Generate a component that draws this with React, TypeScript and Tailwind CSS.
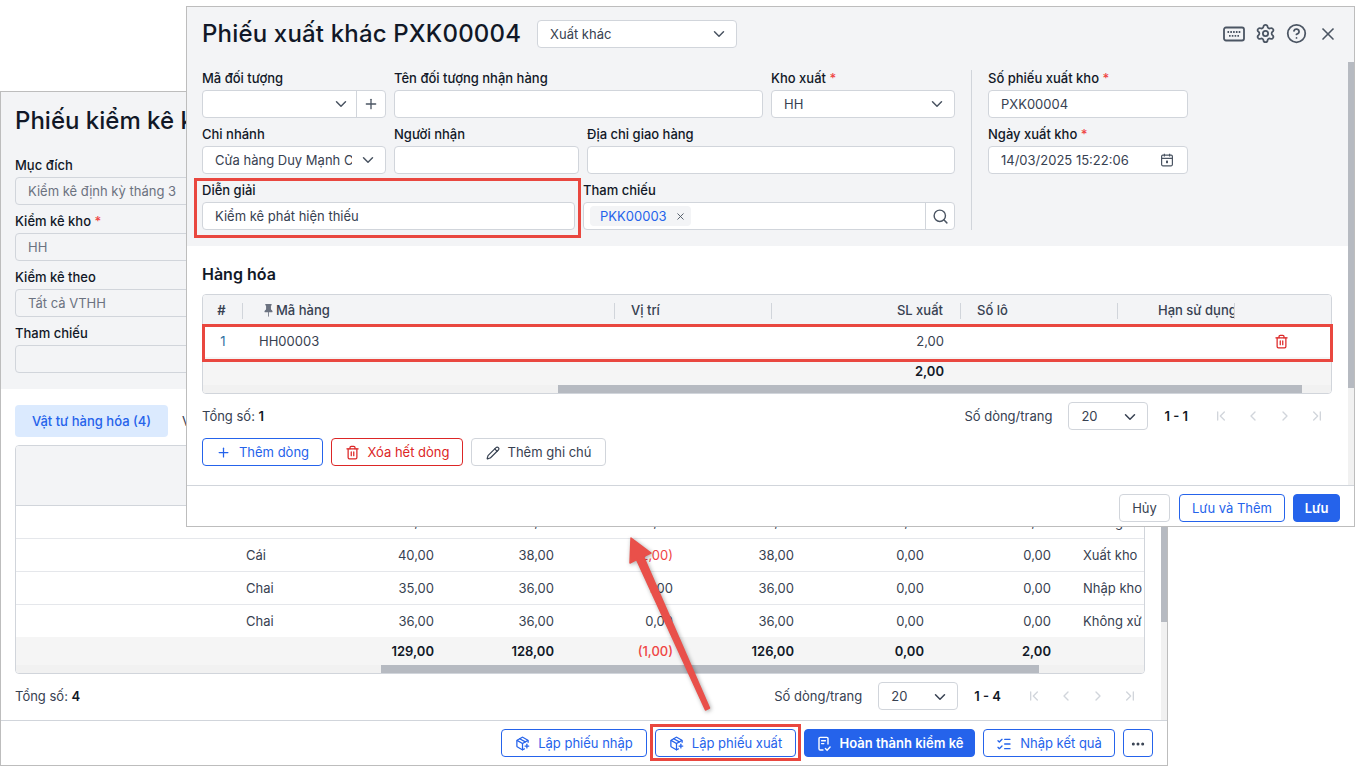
import type { ReactNode } from "react";
import {
  ChevronDown,
  ChevronFirst,
  ChevronLast,
  ChevronLeft,
  ChevronRight,
  CircleHelp,
  Ellipsis,
  ListChecks,
  PackagePlus,
  Pencil,
  Plus,
  Search,
  Settings,
  Trash2,
  X,
} from "lucide-react";
import { BsPinFill } from "react-icons/bs";

function Label({ text, required }: { text: string; required?: boolean }) {
  return (
    <div className="h-4 mb-1 text-[13px] leading-4 font-medium text-[#111827] whitespace-nowrap">
      {text}
      {required && <span className="text-[#ef4444]"> *</span>}
    </div>
  );
}

function Box({ children, muted, className = "" }: { children?: ReactNode; muted?: boolean; className?: string }) {
  return (
    <div
      className={`h-7 flex items-center rounded border border-[#d1d5db] text-[13px] whitespace-nowrap overflow-hidden ${
        muted ? "bg-[#f3f4f6] text-[#6b7280]" : "bg-white text-[#374151]"
      } ${className}`}
    >
      {children}
    </div>
  );
}

function Field({
  label,
  value,
  required,
  muted,
  className = "",
  chevron,
}: {
  label: string;
  value?: string;
  required?: boolean;
  muted?: boolean;
  className?: string;
  chevron?: boolean;
}) {
  return (
    <div className={className}>
      <Label text={label} required={required} />
      <Box muted={muted} className="pl-3 pr-2">
        <span className={`flex-1 overflow-hidden pt-px ${chevron ? "mr-[7px]" : ""}`}>{value}</span>
        {chevron && <ChevronDown size={18} className="text-[#4b5563] shrink-0" />}
      </Box>
    </div>
  );
}

function CalendarIcon() {
  return (
    <svg width="14" height="14" viewBox="0 0 14 14" fill="none" stroke="#4b5563" strokeWidth="1.2">
      <rect x="1.6" y="2.2" width="10.8" height="10.6" rx="1.2" />
      <path d="M1.6 5.4h10.8M4.4 .8v2.6M9.6 .8v2.6" />
      <rect x="6" y="7.6" width="2" height="2.6" fill="#4b5563" stroke="none" />
    </svg>
  );
}

function KeyboardIcon() {
  return (
    <svg width="22" height="16" viewBox="0 0 22 16" fill="none" stroke="#4b5563" strokeWidth="1.8">
      <rect x="1" y="1.5" width="20" height="13" rx="2" />
      <path d="M4.5 6h13M6 9.8h10" strokeDasharray="1.6 1.2" />
    </svg>
  );
}

function DocCheckIcon() {
  return (
    <svg width="16" height="16" viewBox="0 0 16 16" fill="none" stroke="currentColor" strokeWidth="1.4" strokeLinecap="round">
      <path d="M7 14H4.2A1.2 1.2 0 0 1 3 12.8V2.6a1.2 1.2 0 0 1 1.2-1.2h6.6A1.2 1.2 0 0 1 12 2.6V8" />
      <path d="M5.6 4.8h3.8M5.6 7.6h2.2M9.4 12.6l1.7 1.7 3-3.2" />
    </svg>
  );
}

function Pager({ range, className = "" }: { range: string; className?: string }) {
  return (
    <div className={`flex items-center justify-end h-7 text-[13px] text-[#374151] ${className}`}>
      <span className="mr-4 pt-px">Số dòng/trang</span>
      <div className="w-20 h-7 flex items-center justify-between pl-3 pr-2 pt-px mr-4 rounded border border-[#d1d5db] bg-white">
        20
        <ChevronDown size={18} className="text-[#374151]" />
      </div>
      <span className="font-semibold text-[#111827] mr-[25px] pt-px whitespace-nowrap">{range}</span>
      <div className="flex gap-4 text-[#d1d5db]">
        <ChevronFirst size={16} />
        <ChevronLeft size={16} />
        <ChevronRight size={16} />
        <ChevronLast size={16} />
      </div>
    </div>
  );
}

function Btn({ children, tone, className = "" }: { children: ReactNode; tone: "blue" | "red" | "gray" | "solid"; className?: string }) {
  const tones = {
    blue: "border-[#2563eb] text-[#2563eb] bg-white",
    red: "border-[#dc2626] text-[#dc2626] bg-white",
    gray: "border-[#d1d5db] text-[#374151] bg-white",
    solid: "border-[#2563eb] text-white bg-[#2563eb] font-semibold",
  };
  return (
    <button className={`h-7 pt-px flex items-center justify-center rounded border text-[13px] whitespace-nowrap ${tones[tone]} ${className}`}>
      {children}
    </button>
  );
}

const stockRows = [
  ["Chai", "18,00", "18,00", "0,00", "16,00", "0,00", "2,00", "Không xử lý"],
  ["Cái", "40,00", "38,00", "(2,00)", "38,00", "0,00", "0,00", "Xuất kho"],
  ["Chai", "35,00", "36,00", "1,00", "36,00", "0,00", "0,00", "Nhập kho"],
  ["Chai", "36,00", "36,00", "0,00", "36,00", "0,00", "0,00", "Không xử lý"],
];

const stockGrid = "grid grid-cols-[214px_100px_120px_120px_119px_121px_130px_127px_77px] items-center";

function StockTable() {
  return (
    <div className="w-[1130px] border border-[#d1d5db] rounded overflow-hidden text-[13px] text-[#374151]">
      <div className="h-[60px] bg-[#f3f4f6] border-b border-[#d1d5db]" />
      {stockRows.map((row, i) => (
        <div key={i} className={`${stockGrid} pt-[2px] ${i < 3 ? "h-[33px] border-b border-[#e5e7eb]" : "h-8"}`}>
          <span />
          <span className="pl-4">{row[0]}</span>
          {row.slice(1, 7).map((v, j) => (
            <span key={j} className={`text-right pr-4 ${v.startsWith("(") ? "text-[#ef4444]" : ""}`}>
              {v}
            </span>
          ))}
          <span className="pl-4 overflow-hidden whitespace-nowrap">{row[7]}</span>
        </div>
      ))}
      <div className={`${stockGrid} h-7 pt-px bg-[#f5f5f5] font-semibold text-[#111827]`}>
        <span />
        <span />
        <span className="text-right pr-4">129,00</span>
        <span className="text-right pr-4">128,00</span>
        <span className="text-right pr-4 font-medium text-[#ef4444]">(1,00)</span>
        <span className="text-right pr-4">126,00</span>
        <span className="text-right pr-4">0,00</span>
        <span className="text-right pr-4">2,00</span>
      </div>
      <div className="h-2 bg-[#f1f1f1] pl-[365px] pr-[105px]">
        <div className="h-full bg-[#b6bac1]" />
      </div>
    </div>
  );
}

function AuditWindow() {
  return (
    <section className="absolute left-0 top-[91px] w-[1168px] h-[675px] flex flex-col bg-white border border-[#bdbdbd]">
      <div className="flex-1 min-h-0 flex">
        <div className="flex-1 min-w-0 overflow-hidden">
          <div className="h-[297px] bg-[#f3f4f6] pl-[14px] pt-[13px]">
            <h1 className="h-8 text-2xl leading-8 font-medium text-[#111827] whitespace-nowrap mb-5">
              Phiếu kiểm kê kho KK00002
            </h1>
            <div className="w-[400px] flex flex-col gap-2">
              <Field label="Mục đích" value="Kiểm kê định kỳ tháng 3" muted />
              <Field label="Kiểm kê kho" value="HH" required muted />
              <Field label="Kiểm kê theo" value="Tất cả VTHH" muted />
              <Field label="Tham chiếu" muted />
            </div>
          </div>
          <div className="pl-[14px] pt-4">
            <div className="flex items-center gap-[14px] h-8 mb-2 text-[13px]">
              <div className="w-[153px] h-8 pt-px flex items-center justify-center rounded bg-[#dbeafe] text-[#2563eb] font-medium">
                Vật tư hàng hóa (4)
              </div>
              <div className="pt-px text-[#374151]">Vị trí</div>
            </div>
            <StockTable />
            <div className="w-[1130px] flex items-center justify-between mt-2">
              <div className="pt-px text-[13px] text-[#374151]">
                Tổng số: <b className="font-semibold text-[#111827]">4</b>
              </div>
              <Pager range="1 - 4" className="pr-[7px]" />
            </div>
            <div className="mt-[7px] text-[13px] font-medium text-[#111827]">Ghi chú</div>
          </div>
        </div>
        <div className="w-[6px] shrink-0 bg-[#f1f1f1]">
          <div className="h-[530px] bg-[#b6bac1]" />
        </div>
      </div>
      <footer className="h-[45px] shrink-0 border-t border-[#d1d5db] flex items-start justify-end gap-2 pt-2 pr-[14px]">
        <Btn tone="blue" className="w-[146px] gap-2">
          <PackagePlus size={15} />
          Lập phiếu nhập
        </Btn>
        <Btn tone="blue" className="w-[141px] gap-2">
          <PackagePlus size={15} />
          Lập phiếu xuất
        </Btn>
        <Btn tone="solid" className="w-[171px] gap-2">
          <DocCheckIcon />
          Hoàn thành kiểm kê
        </Btn>
        <Btn tone="blue" className="w-[132px] gap-2">
          <ListChecks size={16} />
          Nhập kết quả
        </Btn>
        <Btn tone="blue" className="w-[30px] !text-[#374151]">
          <Ellipsis size={16} strokeWidth={2.5} />
        </Btn>
      </footer>
    </section>
  );
}

const lineGrid = "grid grid-cols-[40px_372px_157px_189px_157px_117px_96px] items-center";

function LineTable() {
  const sep = "h-4 flex items-center border-r border-[#d1d5db]";
  return (
    <div className="border border-[#d1d5db] rounded overflow-hidden text-[13px]">
      <div className={`${lineGrid} h-[31px] bg-[#f3f4f6] font-medium text-[#374151]`}>
        <div className={`${sep} justify-center pr-[2px] font-semibold`}>#</div>
        <div className={`${sep} pl-[19px]`}>
          <BsPinFill size={13} className="text-[#6b7280] mr-[1px]" />
          Mã hàng
        </div>
        <div className={`${sep} pl-4`}>Vị trí</div>
        <div className={`${sep} justify-end pr-[17px]`}>SL xuất</div>
        <div className={`${sep} pl-4`}>Số lô</div>
        <div className={`${sep} pl-10 overflow-hidden whitespace-nowrap`}>Hạn sử dụng</div>
        <div />
      </div>
      <div className={`${lineGrid} h-[31px] bg-white text-[#374151]`}>
        <span className="text-center text-[#2f6f9f]">1</span>
        <span className="pl-4">HH00003</span>
        <span />
        <span className="text-right pr-[17px]">2,00</span>
        <span />
        <span />
        <span className="flex justify-center pr-[3px]">
          <Trash2 size={15} className="text-[#dc2626]" />
        </span>
      </div>
      <div className={`${lineGrid} h-7 pt-px bg-[#f5f5f5] font-semibold text-[#111827]`}>
        <span />
        <span />
        <span />
        <span className="text-right pr-[17px]">2,00</span>
      </div>
      <div className="h-2 bg-[#f1f1f1] pl-[355px] pr-[29px]">
        <div className="h-full bg-[#b6bac1]" />
      </div>
    </div>
  );
}

function IssueWindow() {
  return (
    <section className="absolute left-[186px] top-[6px] w-[1169px] h-[521px] flex flex-col bg-white border border-[#bdbdbd]">
      <header className="h-[55px] shrink-0 bg-[#f3f4f6] flex items-center pb-[2px] pl-[15px] pr-4">
        <h2 className="text-2xl tracking-[0.17px] font-medium text-[#111827] whitespace-nowrap">Phiếu xuất khác PXK00004</h2>
        <Box className="w-[200px] ml-4 pl-3 pr-2 justify-between">
          <span className="pt-[3px]">Xuất khác</span>
          <ChevronDown size={18} className="text-[#4b5563]" />
        </Box>
        <div className="ml-auto flex items-center gap-[10px] text-[#4b5563]">
          <KeyboardIcon />
          <Settings size={21} />
          <CircleHelp size={21} />
          <X size={20} className="ml-[1px]" />
        </div>
      </header>
      <div className="flex-1 min-h-0 flex">
        <div className="flex-1 min-w-0">
          <div className="h-[184px] bg-[#f3f4f6] flex pt-2 pl-[15px]">
            <div className="w-[753px] flex flex-col gap-2">
              <div className="flex gap-2">
                <div className="w-[184px]">
                  <Label text="Mã đối tượng" />
                  <Box>
                    <span className="flex-1" />
                    <ChevronDown size={18} className="text-[#4b5563] mr-[6px]" />
                    <span className="w-[29px] h-full flex items-center justify-center border-l border-[#d1d5db] text-[#4b5563]">
                      <Plus size={16} />
                    </span>
                  </Box>
                </div>
                <Field label="Tên đối tượng nhận hàng" className="w-[369px]" />
                <Field label="Kho xuất" value="HH" required chevron className="w-[184px]" />
              </div>
              <div className="flex gap-2">
                <Field label="Chi nhánh" value="Cửa hàng Duy Mạnh Cầu Giấy" chevron className="w-[184px]" />
                <Field label="Người nhận" className="w-[185px]" />
                <Field label="Địa chỉ giao hàng" className="w-[368px]" />
              </div>
              <div className="flex gap-2">
                <Field label="Diễn giải" value="Kiểm kê phát hiện thiếu" className="w-[373px]" />
                <div className="w-[372px]">
                  <Label text="Tham chiếu" />
                  <Box>
                    <span className="ml-[6px] h-5 pl-[10px] pr-[5px] pt-px flex items-center gap-[8px] rounded-sm bg-[#f3f4f6] text-[#2563eb]">
                      PKK00003
                      <X size={11} className="text-[#4b5563]" />
                    </span>
                    <span className="ml-auto w-[29px] h-full flex items-center justify-center border-l border-[#d1d5db] text-[#4b5563]">
                      <Search size={17} />
                    </span>
                  </Box>
                </div>
              </div>
            </div>
            <div className="w-px h-40 bg-[#d1d5db] mx-4" />
            <div className="w-[200px] flex flex-col gap-2">
              <Field label="Số phiếu xuất kho" value="PXK00004" required />
              <div>
                <Label text="Ngày xuất kho" required />
                <Box className="pl-3 pr-[13px] justify-between">
                  <span className="pt-px">14/03/2025 15:22:06</span>
                  <CalendarIcon />
                </Box>
              </div>
            </div>
          </div>
          <div className="pl-[15px] pr-4 pt-5">
            <h3 className="h-4 leading-4 mb-3 text-base font-semibold text-[#111827]">Hàng hóa</h3>
            <LineTable />
            <div className="flex items-center justify-between mt-2">
              <div className="pt-px text-[13px] text-[#374151]">
                Tổng số: <b className="font-semibold text-[#111827]">1</b>
              </div>
              <Pager range="1 - 1" className="pr-[7px]" />
            </div>
            <div className="flex gap-2 mt-2">
              <Btn tone="blue" className="w-[121px] gap-2">
                <Plus size={15} />
                Thêm dòng
              </Btn>
              <Btn tone="red" className="w-[132px] gap-2">
                <Trash2 size={15} />
                Xóa hết dòng
              </Btn>
              <Btn tone="gray" className="w-[135px] gap-2">
                <Pencil size={14} />
                Thêm ghi chú
              </Btn>
            </div>
          </div>
        </div>
        <div className="w-[6px] shrink-0 bg-[#f1f1f1]">
          <div className="h-[326px] bg-[#b6bac1]" />
        </div>
      </div>
      <footer className="h-[41px] shrink-0 border-t border-[#d1d5db] flex items-start justify-end gap-2 pt-2 pr-[14px]">
        <Btn tone="gray" className="w-[51px] mr-px">
          Hủy
        </Btn>
        <Btn tone="blue" className="w-[106px]">
          Lưu và Thêm
        </Btn>
        <Btn tone="solid" className="w-[47px]">
          Lưu
        </Btn>
      </footer>
    </section>
  );
}

export default function App() {
  const mark = "absolute border-[3px] border-[#e9473f] pointer-events-none";
  return (
    <div className="relative w-[1364px] h-[766px] overflow-hidden bg-white font-[Inter,sans-serif]">
      <AuditWindow />
      <IssueWindow />
      <div className={`${mark} left-[194px] top-[178px] w-[387px] h-[60px]`} />
      <div className={`${mark} left-[202px] top-[324px] w-[1131px] h-[38px]`} />
      <div className={`${mark} left-[650px] top-[724px] w-[151px] h-[37px]`} />
      <svg className="absolute left-[620px] top-[530px] pointer-events-none" width="100" height="190" viewBox="620 530 100 190">
        <polygon
          points="631,538 651,553 643.5,556.5 709.5,708 705.5,710 636.5,559.5 630,563"
          fill="#e9504a"
          stroke="#e9504a"
          strokeWidth="1.5"
          strokeLinejoin="round"
          className="drop-shadow-[1px_1px_2px_rgba(0,0,0,0.35)]"
        />
      </svg>
    </div>
  );
}
